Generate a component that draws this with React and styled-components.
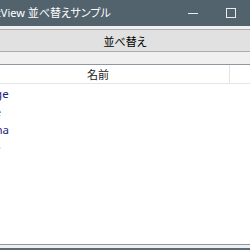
import React from "react";
import styled, { createGlobalStyle } from "styled-components";

const GlobalStyle = createGlobalStyle`
  html, body {
    margin: 0;
    padding: 0;
    overflow: hidden;
    background: #f0f0f0;
  }
  body {
    font-family: "Noto Sans", "Noto Sans CJK JP", sans-serif;
  }
`;

const Window = styled.div`
  width: 328px;
  height: 250px;
  margin-left: -40px;
  display: flex;
  flex-direction: column;
  background: #f0f0f0;
  border-bottom: 2px solid #5b6b75;
  box-sizing: border-box;
`;

const TitleBar = styled.div`
  height: 26px;
  flex: none;
  display: flex;
  align-items: center;
  background: #52636e;
  color: #ffffff;
`;

const Title = styled.div`
  flex: 1;
  padding-left: 23px;
  font-size: 11px;
  font-feature-settings: "palt";
  white-space: nowrap;
  line-height: 26px;
`;

const CaptionButton = styled.div`
  width: 38px;
  height: 26px;
  display: flex;
  align-items: center;
  justify-content: center;
`;

const Client = styled.div`
  flex: 1;
  display: flex;
  flex-direction: column;
  padding: 3px 4px 3px 6px;
  min-height: 0;
`;

const SortButton = styled.button`
  height: 23px;
  flex: none;
  border: 1px solid #adadad;
  background: #e1e1e1;
  font-family: "Noto Sans", "Noto Sans CJK JP", sans-serif;
  font-size: 11px;
  font-feature-settings: "palt";
  color: #000;
  padding: 0;
  margin: 0;
`;

const ListView = styled.div`
  margin-top: 12px;
  flex: 1;
  border: 1px solid #8f989e;
  background: #ffffff;
  display: flex;
  flex-direction: column;
  min-height: 0;
`;

const Header = styled.div`
  height: 19px;
  flex: none;
  display: flex;
  border-bottom: 1px solid #e5e5e5;
  box-sizing: border-box;
`;

const HeaderCell = styled.div`
  width: ${(p) => p.$width}px;
  display: flex;
  align-items: center;
  justify-content: center;
  border-right: 1px solid #e5e5e5;
  font-size: 11px;
  font-feature-settings: "palt";
  color: #1a1a1a;
`;

const Row = styled.div`
  height: 18px;
  display: flex;
  align-items: center;
  padding-left: 1px;
  font-size: 11.5px;
  color: #24247a;
  white-space: nowrap;
`;

const items = ["Orange", "Grape", "Banana", "Prune"];

export default function App() {
  return (
    <>
      <GlobalStyle />
      <Window>
        <TitleBar>
          <Title>ListView 並べ替えサンプル</Title>
          <CaptionButton>
            <svg width="10" height="10" viewBox="0 0 10 10">
              <line x1="0" y1="5.5" x2="10" y2="5.5" stroke="#e8ecee" strokeWidth="1" />
            </svg>
          </CaptionButton>
          <CaptionButton>
            <svg width="10" height="10" viewBox="0 0 10 10">
              <rect x="0.5" y="0.5" width="9" height="9" fill="none" stroke="#e8ecee" strokeWidth="1" />
            </svg>
          </CaptionButton>
          <CaptionButton>
            <svg width="10" height="10" viewBox="0 0 10 10">
              <path d="M0.5 0.5 L9.5 9.5 M9.5 0.5 L0.5 9.5" stroke="#e8ecee" strokeWidth="1" />
            </svg>
          </CaptionButton>
        </TitleBar>
        <Client>
          <SortButton>並べ替え</SortButton>
          <ListView>
            <Header>
              <HeaderCell $width={262}>名前</HeaderCell>
            </Header>
            {items.map((it) => (
              <Row key={it}>{it}</Row>
            ))}
          </ListView>
        </Client>
      </Window>
    </>
  );
}
